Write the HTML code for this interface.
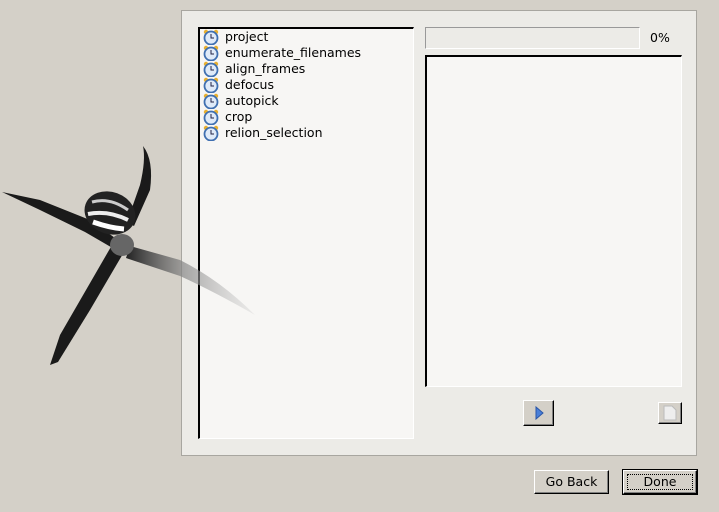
<!DOCTYPE html>
<html><head><style>
body{margin:0;width:719px;height:512px;background:#d4d0c8;position:relative;overflow:hidden;font-family:"DejaVu Sans","Liberation Sans",sans-serif;font-size:12.5px;color:#000}
.a{position:absolute;box-sizing:border-box}
.panel{left:181px;top:10px;width:516px;height:446px;background:#ecebe7;border:1px solid #a8a6a0}
.list{left:198px;top:27px;width:216px;height:412px;background:#f7f6f4;border-top:2px solid #000;border-left:2px solid #000;border-right:1px solid #fff;border-bottom:1px solid #fff}
.item{position:absolute;left:3px;height:16px;line-height:16px}
.item span{position:absolute;left:22px;top:0;white-space:nowrap}
.btn{background:#d4d0c8;border:1px solid;border-color:#fff #000 #000 #fff;box-shadow:inset -1px -1px 0 #808080;text-align:center;line-height:22px}
</style></head><body>
<div class="a panel"></div>
<div class="a list">
<div class="item" style="top:0"><svg width="16" height="16"><circle cx="3" cy="3" r="2.2" fill="#e8b030"/><circle cx="13" cy="3" r="2.2" fill="#e8b030"/><circle cx="8" cy="9" r="6.5" fill="#dfeaf8" stroke="#3f6fb0" stroke-width="1.8"/><path d="M8 5v4h3" stroke="#224" fill="none"/></svg><span>project</span></div>
<div class="item" style="top:16px"><svg width="16" height="16"><circle cx="3" cy="3" r="2.2" fill="#e8b030"/><circle cx="13" cy="3" r="2.2" fill="#e8b030"/><circle cx="8" cy="9" r="6.5" fill="#dfeaf8" stroke="#3f6fb0" stroke-width="1.8"/><path d="M8 5v4h3" stroke="#224" fill="none"/></svg><span>enumerate_filenames</span></div>
<div class="item" style="top:32px"><svg width="16" height="16"><circle cx="3" cy="3" r="2.2" fill="#e8b030"/><circle cx="13" cy="3" r="2.2" fill="#e8b030"/><circle cx="8" cy="9" r="6.5" fill="#dfeaf8" stroke="#3f6fb0" stroke-width="1.8"/><path d="M8 5v4h3" stroke="#224" fill="none"/></svg><span>align_frames</span></div>
<div class="item" style="top:48px"><svg width="16" height="16"><circle cx="3" cy="3" r="2.2" fill="#e8b030"/><circle cx="13" cy="3" r="2.2" fill="#e8b030"/><circle cx="8" cy="9" r="6.5" fill="#dfeaf8" stroke="#3f6fb0" stroke-width="1.8"/><path d="M8 5v4h3" stroke="#224" fill="none"/></svg><span>defocus</span></div>
<div class="item" style="top:64px"><svg width="16" height="16"><circle cx="3" cy="3" r="2.2" fill="#e8b030"/><circle cx="13" cy="3" r="2.2" fill="#e8b030"/><circle cx="8" cy="9" r="6.5" fill="#dfeaf8" stroke="#3f6fb0" stroke-width="1.8"/><path d="M8 5v4h3" stroke="#224" fill="none"/></svg><span>autopick</span></div>
<div class="item" style="top:80px"><svg width="16" height="16"><circle cx="3" cy="3" r="2.2" fill="#e8b030"/><circle cx="13" cy="3" r="2.2" fill="#e8b030"/><circle cx="8" cy="9" r="6.5" fill="#dfeaf8" stroke="#3f6fb0" stroke-width="1.8"/><path d="M8 5v4h3" stroke="#224" fill="none"/></svg><span>crop</span></div>
<div class="item" style="top:96px"><svg width="16" height="16"><circle cx="3" cy="3" r="2.2" fill="#e8b030"/><circle cx="13" cy="3" r="2.2" fill="#e8b030"/><circle cx="8" cy="9" r="6.5" fill="#dfeaf8" stroke="#3f6fb0" stroke-width="1.8"/><path d="M8 5v4h3" stroke="#224" fill="none"/></svg><span>relion_selection</span></div>
</div>
<div class="a" style="left:425px;top:27px;width:215px;height:22px;background:#ecebe7;border:1px solid;border-color:#999 #fff #fff #999"></div>
<div class="a" style="left:650px;top:30px">0%</div>
<div class="a" style="left:425px;top:55px;width:257px;height:332px;background:#f7f6f4;border-top:2px solid #000;border-left:2px solid #000;border-right:1px solid #fff;border-bottom:1px solid #fff"></div>
<div class="a btn" style="left:523px;top:400px;width:31px;height:26px"><svg width="10" height="14" style="margin-top:5px"><path d="M2 1L9 7L2 13Z" fill="#4a7fd8" stroke="#2a56a8"/></svg></div>
<div class="a btn" style="left:658px;top:402px;width:24px;height:22px"><svg width="14" height="16" style="margin-top:2px"><path d="M1 1h8l4 4v10H1Z" fill="#eee" stroke="#bbb"/></svg></div>
<div class="a btn" style="left:534px;top:470px;width:75px;height:24px">Go Back</div>
<div class="a" style="left:622px;top:469px;width:76px;height:26px;border:1px solid #000"><div class="a btn" style="left:0;top:0;width:74px;height:24px"><div class="a" style="left:3px;top:3px;width:66px;height:16px;border:1px dotted #000"></div>Done</div></div>
<svg class="a" style="left:0;top:140px" width="260" height="230" viewBox="0 140 260 230">
<defs><linearGradient id="f" x1="0" x2="1"><stop offset="0" stop-color="#222"/><stop offset="0.45" stop-color="#888" stop-opacity=".7"/><stop offset="1" stop-color="#ccc" stop-opacity=".3"/></linearGradient></defs>
<path d="M2 192 L40 200 L90 220 L122 243 L116 250 L85 232 L40 210 Z" fill="#1a1a1a"/>
<path d="M143 146 Q154 160 150 190 L134 226 L127 222 L140 185 Q146 160 143 146Z" fill="#1a1a1a"/>
<path d="M112 245 L124 252 L90 310 L58 362 L50 365 L60 335 Z" fill="#1a1a1a"/>
<path d="M130 246 L180 260 Q220 280 255 315 Q215 292 180 276 L126 258Z" fill="url(#f)"/>
<ellipse cx="110" cy="213" rx="26" ry="21" fill="#222" transform="rotate(20 110 213)"/>
<path d="M92 202 Q110 197 128 210" stroke="#ccc" stroke-width="3" fill="none"/>
<path d="M88 214 Q108 210 128 220" stroke="#eee" stroke-width="4" fill="none"/>
<path d="M93 222 Q110 228 124 229" stroke="#fff" stroke-width="5" fill="none"/>
<ellipse cx="122" cy="245" rx="12" ry="11" fill="#666"/>
</svg>
</body></html>
